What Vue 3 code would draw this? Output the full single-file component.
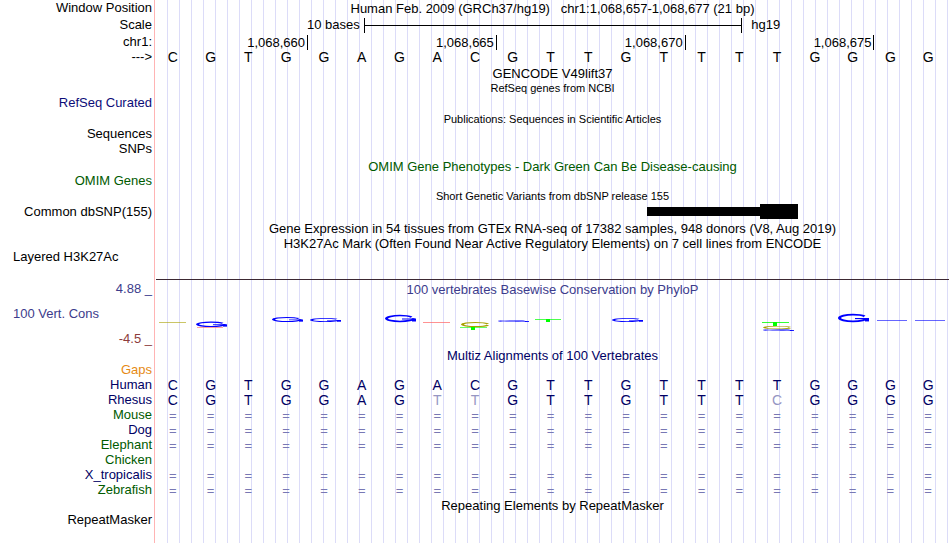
<template>
  <main class="browser">
    <div v-for="(row, i) in rows" :key="i" class="row" :class="'row-' + row.size">
      <div v-if="row.type === 'cons'" class="cons-labels">
        <span class="max">4.88 _</span>
        <span class="left-label">100 Vert. Cons</span>
        <span class="min">-4.5 _</span>
      </div>
      <div v-else class="label" :class="[row.color, { 'left-label': row.left }]">{{ row.label }}</div>

      <div v-if="row.type === 'scale'" class="scale">
        <span class="scale-text">10 bases</span>
        <span class="scale-bar"></span>
        <span class="assembly">hg19</span>
      </div>

      <div v-else-if="row.type === 'ruler'" class="ruler">
        <span v-for="p in positions" :key="p">{{ p }}</span>
      </div>

      <div v-else-if="row.type === 'seq'" class="seq" :class="[row.seqColor, { unaligned: row.bases === gap }]">
        <span
          v-for="(b, n) in row.bases"
          :key="n"
          :class="{ faded: row.diff?.includes(n) }"
        >{{ b }}</span>
      </div>

      <div v-else-if="row.type === 'snp'" class="snp">
        <span class="snp-thin"></span>
        <span class="snp-thick"></span>
      </div>

      <div v-else-if="row.type === 'cons'" class="cons">
        <div class="cons-title">100 vertebrates Basewise Conservation by PhyloP</div>
        <svg class="cons-graph" viewBox="0 0 793 51" preserveAspectRatio="none" aria-hidden="true">
          <g
            v-for="(m, n) in marks"
            :key="n"
            :stroke="m.color"
            :fill="m.color"
            :transform="`translate(${m.x} ${m.y}) scale(1 ${m.h / 14})`"
          >
            <template v-if="m.kind === 'ring'">
              <ellipse cx="15" cy="7" rx="13.5" ry="5.8" fill="none" stroke-width="3" pathLength="100" stroke-dasharray="94 6" />
              <rect x="17" y="7" width="12" height="2" stroke="none" />
              <rect x="27" y="7" width="4" height="6" stroke="none" />
            </template>
            <ellipse
              v-else-if="m.kind === 'open'"
              cx="14.5" cy="7" rx="13" ry="5.8" fill="none" stroke-width="3"
              pathLength="100" stroke-dasharray="94 6" stroke-dashoffset="-3"
            />
            <rect v-else-if="m.kind === 'block'" width="4" height="14" stroke="none" />
            <rect v-else :width="m.w" height="14" stroke="none" />
          </g>
        </svg>
      </div>

      <div v-else class="title" :class="[row.titleColor, { small: row.small }]">{{ row.title }}</div>
    </div>
  </main>
</template>

<script setup>
const human = 'CGTGGAGACGTTGTTTTGGGG'
const rhesus = 'CGTGGAGTTGTTGTTTCGGGG'
const gap = '='.repeat(21)

const positions = ['1,068,660', '1,068,665', '1,068,670', '1,068,675']

const rows = [
  { size: 16, label: 'Window Position', title: 'Human Feb. 2009 (GRCh37/hg19)   chr1:1,068,657-1,068,677 (21 bp)' },
  { size: 18, type: 'scale', label: 'Scale' },
  { size: 16, type: 'ruler', label: 'chr1:' },
  { size: 14, type: 'seq', label: '--->', bases: human },
  { size: 17, title: 'GENCODE V49lift37' },
  { size: 14, title: 'RefSeq genes from NCBI', small: true },
  { size: 15, label: 'RefSeq Curated', color: 'blue' },
  { size: 17, title: 'Publications: Sequences in Scientific Articles', small: true },
  { size: 14, label: 'Sequences' },
  { size: 16, label: 'SNPs' },
  { size: 17, title: 'OMIM Gene Phenotypes - Dark Green Can Be Disease-causing', titleColor: 'green' },
  { size: 14, label: 'OMIM Genes', color: 'green' },
  { size: 16, title: 'Short Genetic Variants from dbSNP release 155', small: true },
  { size: 15, type: 'snp', label: 'Common dbSNP(155)' },
  { size: 17, title: 'Gene Expression in 54 tissues from GTEx RNA-seq of 17382 samples, 948 donors (V8, Aug 2019)' },
  { size: 14, title: 'H3K27Ac Mark (Often Found Near Active Regulatory Elements) on 7 cell lines from ENCODE' },
  { size: 'signal', label: 'Layered H3K27Ac', left: true },
  { size: 'cons', type: 'cons' },
  { size: 14, title: 'Multiz Alignments of 100 Vertebrates', titleColor: 'navy' },
  { size: 15, label: 'Gaps', color: 'orange' },
  { size: 15, type: 'seq', label: 'Human', color: 'navy', bases: human, seqColor: 'navy' },
  { size: 15, type: 'seq', label: 'Rhesus', color: 'navy', bases: rhesus, diff: [7, 8, 16], seqColor: 'navy' },
  { size: 15, type: 'seq', label: 'Mouse', color: 'green', bases: gap },
  { size: 15, type: 'seq', label: 'Dog', color: 'navy', bases: gap },
  { size: 15, type: 'seq', label: 'Elephant', color: 'green', bases: gap },
  { size: 15, label: 'Chicken', color: 'green' },
  { size: 15, type: 'seq', label: 'X_tropicalis', color: 'navy', bases: gap },
  { size: 15, type: 'seq', label: 'Zebrafish', color: 'green', bases: gap },
  { size: 16, title: 'Repeating Elements by RepeatMasker' },
  { size: 14, label: 'RepeatMasker' },
]

const blue = '#0000ff'
const olive = '#a8a000'
const lime = '#00ff00'
const red = '#ff6464'

// per-base conservation scores, y measured from the top of the graph
const marks = [
  { kind: 'bar', x: 3, y: 25, w: 27, h: 0.6, color: olive },
  { kind: 'bar', x: 41, y: 30, w: 26, h: 0.6, color: red },
  { kind: 'ring', x: 40, y: 24.6, h: 5.4, color: blue },
  { kind: 'ring', x: 116, y: 20, h: 5, color: blue },
  { kind: 'ring', x: 154, y: 21, h: 4, color: blue },
  { kind: 'ring', x: 229, y: 18, h: 7, color: blue },
  { kind: 'bar', x: 267, y: 25, w: 27, h: 0.7, color: red },
  { kind: 'open', x: 305, y: 25, h: 5, color: olive },
  { kind: 'bar', x: 304, y: 30, w: 27, h: 0.6, color: lime },
  { kind: 'block', x: 315, y: 30, h: 3, color: lime },
  { kind: 'ring', x: 342, y: 23, h: 2, color: blue },
  { kind: 'bar', x: 379, y: 22, w: 26, h: 0.7, color: lime },
  { kind: 'block', x: 390, y: 22, h: 3, color: lime },
  { kind: 'ring', x: 456, y: 21, h: 4, color: blue },
  { kind: 'bar', x: 606, y: 25, w: 27, h: 0.8, color: lime },
  { kind: 'block', x: 617, y: 25, h: 4, color: lime },
  { kind: 'open', x: 607, y: 29, h: 3.2, color: olive },
  { kind: 'ring', x: 607, y: 32, h: 2, color: blue },
  { kind: 'ring', x: 682, y: 17, h: 8, color: blue },
  { kind: 'bar', x: 721, y: 23, w: 30, h: 0.6, color: blue },
  { kind: 'bar', x: 759, y: 23, w: 30, h: 0.6, color: blue },
]
</script>

<style>
body {
  margin: 0;
  background: #fff;
}
</style>

<style scoped>
.browser {
  min-height: 100vh;
  font-family: 'Liberation Sans', Arial, Helvetica, sans-serif;
  font-size: 13px;
  line-height: 14px;
  color: #000;
  white-space: pre;
  background:
    linear-gradient(#ffb4b4, #ffb4b4) 154px 0 / 1px 100% no-repeat,
    repeating-linear-gradient(90deg, transparent 0 11px, #dcdcf8 11px 12px) 156px 0 / calc(100% - 157px) 100% no-repeat;
}
.row {
  display: grid;
  grid-template-columns: 152px minmax(0, 1fr);
  column-gap: 4px;
  align-items: center;
  padding-right: 1px;
}
.row-14 { height: 14px; }
.row-15 { height: 15px; }
.row-16 { height: 16px; }
.row-17 { height: 17px; }
.row-18 { height: 18px; }
.row-signal {
  height: 30px;
  align-items: stretch;
}
.row-signal .title { border-bottom: 1px solid #3c2832; }
.row-cons {
  height: 68px;
  align-items: stretch;
}

.label { text-align: right; }
.label.left-label,
.cons-labels .left-label {
  padding-left: 13px;
  text-align: left;
}
.title {
  line-height: 16px;
  text-align: center;
}
.row-14 .title,
.row-16 .title,
.row-17 .title { margin: 0 0 -2px; }
.row .small {
  margin: 0;
  line-height: 14px;
  font-size: 11px;
}

.blue { color: #0c0c78; }
.navy { color: #000064; }
.green { color: #005a00; }
.orange { color: #e68a14; }

.scale {
  display: grid;
  grid-template-columns: 5.5fr 10fr 5.5fr;
  align-items: center;
}
.scale-text {
  text-align: right;
  padding-right: 4px;
}
.scale-bar {
  height: 15px;
  margin-right: -1px;
  border: solid #000;
  border-width: 0 1px;
  background: linear-gradient(#000, #000) center / 100% 1px no-repeat;
}
.assembly { padding-left: 10px; }

.ruler {
  display: grid;
  grid-template-columns: 4fr 5fr 5fr 5fr 2fr;
}
.ruler span {
  margin-right: -1px;
  padding: 1px 2px 0 0;
  border-right: 1px solid #000;
  text-align: right;
}

.seq {
  display: grid;
  grid-template-columns: repeat(21, 1fr);
  font-size: 14px;
}
.seq span {
  text-align: center;
  padding-right: 4px;
}
.seq .faded { color: #9696c3; }
.unaligned {
  padding-top: 2px;
  font-size: 13px;
  color: #7878b4;
}

.snp {
  display: grid;
  grid-template-columns: 13fr 3fr 1fr 4fr;
  align-items: center;
}
.snp-thin {
  grid-column: 2;
  height: 9px;
  background: #000;
}
.snp-thick {
  height: 15px;
  background: #000;
}

.cons-labels {
  display: flex;
  flex-direction: column;
  justify-content: space-between;
  padding: 2px 0;
  text-align: right;
  color: #3c3c8c;
}
.cons-labels .min { color: #8c3c3c; }
.cons {
  display: flex;
  flex-direction: column;
  padding-top: 3px;
}
.cons-title {
  text-align: center;
  color: #3c3c8c;
}
.cons-graph {
  display: block;
  width: 100%;
  height: 51px;
}
</style>
